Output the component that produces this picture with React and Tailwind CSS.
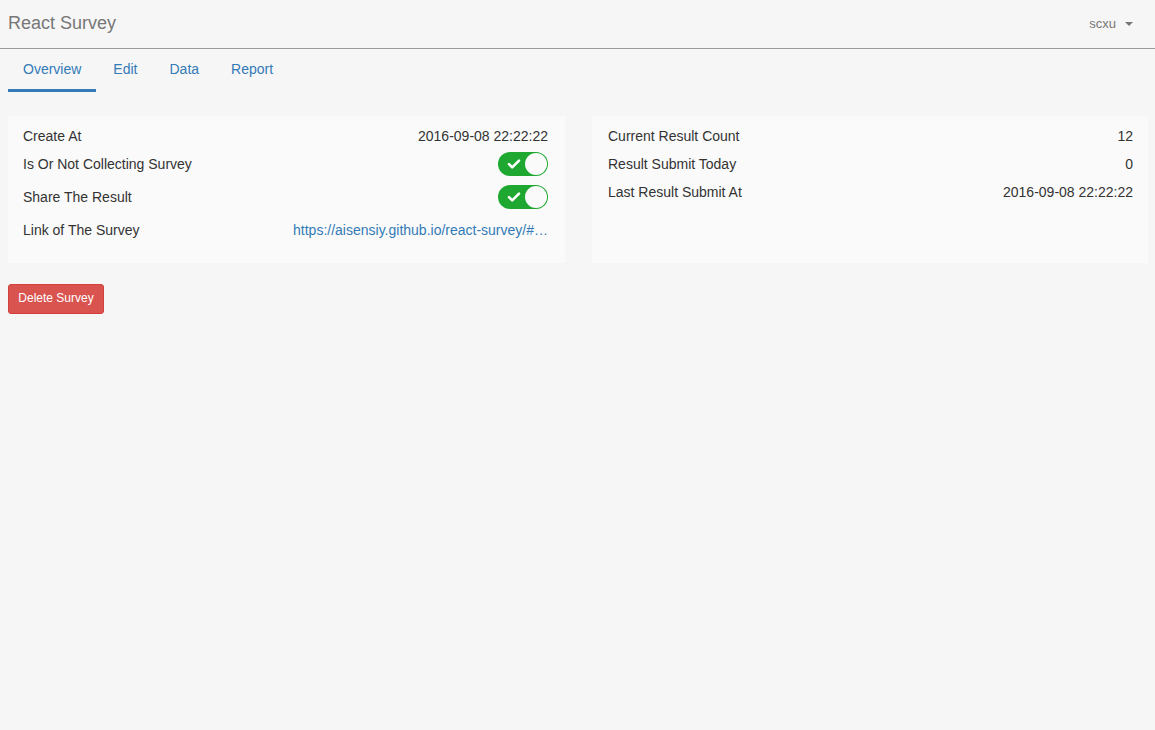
import React from 'react';

const Toggle = () => (
  <div className="relative w-[50px] h-6 rounded-full bg-[#1ea831]">
    <svg className="absolute left-[9px] top-[6px] w-[14px] h-[12px]" viewBox="0 0 14 12" fill="none">
      <path d="M2 6.2l3.2 3.2L12 2.6" stroke="white" strokeWidth="2.6" strokeLinecap="round" strokeLinejoin="round" />
    </svg>
    <div className="absolute right-[1px] top-[1px] w-[22px] h-[22px] rounded-full bg-[#fafafa]" />
  </div>
);

const tabs = ['Overview', 'Edit', 'Data', 'Report'];

export default function App() {
  return (
    <div className="min-h-[730px] bg-[#f6f6f6] text-[#333] text-sm font-['Liberation_Sans',Arial,sans-serif]">
      {/* Header */}
      <div className="h-[49px] flex items-center justify-between px-2 border-b border-[#9a9a9a]">
        <div className="text-[18px] text-[#777]">React Survey</div>
        <div className="flex items-center gap-[9px] pr-[14px] text-[13px] text-[#777]">
          <span>scxu</span>
          <span className="w-0 h-0 border-l-[4px] border-r-[4px] border-t-[4px] border-l-transparent border-r-transparent border-t-[#777]" />
        </div>
      </div>

      {/* Tabs */}
      <div className="flex px-2 h-[43px]">
        {tabs.map((t, i) => (
          <div
            key={t}
            className={`mr-[2px] px-[15px] flex items-center text-[#337ab7] border-b-[3px] ${i === 0 ? 'border-[#337ab7]' : 'border-transparent'}`}
          >
            <span>{t}</span>
          </div>
        ))}
      </div>

      {/* Panels */}
      <div className="grid grid-cols-[557px_556px] gap-[27px] px-2 mt-[24px]">
        <div className="bg-[#fafafa] pl-[15px] pr-[17px] pt-[10px] pb-[23px]">
          <div className="h-5 flex items-center justify-between">
            <span>Create At</span>
            <span>2016-09-08 22:22:22</span>
          </div>
          <div className="h-6 mt-[6px] flex items-center justify-between">
            <span>Is Or Not Collecting Survey</span>
            <Toggle />
          </div>
          <div className="h-6 mt-[9px] flex items-center justify-between">
            <span>Share The Result</span>
            <Toggle />
          </div>
          <div className="h-5 mt-[11px] flex items-center justify-between">
            <span>Link of The Survey</span>
            <a href="#" className="text-[#337ab7]">https://aisensiy.github.io/react-survey/#…</a>
          </div>
        </div>
        <div className="bg-[#fafafa] pl-[16px] pr-[15px] pt-[10px] pb-[23px]">
          <div className="h-5 flex items-center justify-between">
            <span>Current Result Count</span>
            <span>12</span>
          </div>
          <div className="h-5 mt-[8px] flex items-center justify-between">
            <span>Result Submit Today</span>
            <span>0</span>
          </div>
          <div className="h-5 mt-[8px] flex items-center justify-between">
            <span>Last Result Submit At</span>
            <span>2016-09-08 22:22:22</span>
          </div>
        </div>
      </div>

      {/* Actions */}
      <div className="px-2 mt-[21px]">
        <button className="h-[30px] w-[96px] rounded-[3px] bg-[#d9534f] border border-[#d43f3a] text-white text-[12px]">
          Delete Survey
        </button>
      </div>
    </div>
  );
}
